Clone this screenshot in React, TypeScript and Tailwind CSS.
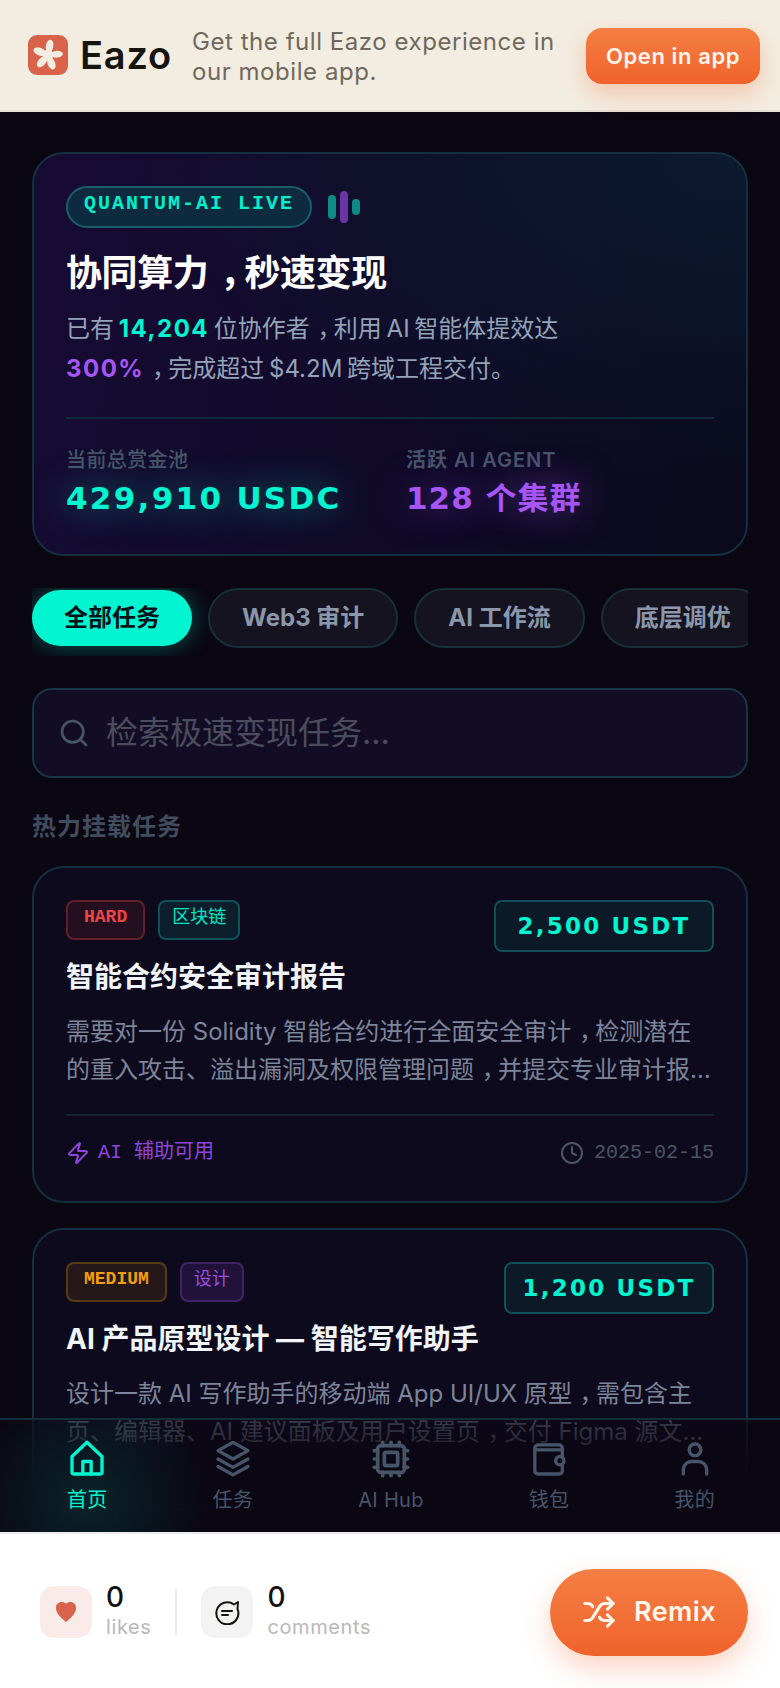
import { Clock, Cpu, Search, Shuffle, Zap } from "lucide-react"
import type { ReactNode } from "react"

const sans = "font-['Inter','Noto_Sans_CJK_SC',sans-serif]"
const mono = "font-['Liberation_Mono','Noto_Sans_CJK_SC',monospace]"
const display = "font-['DejaVu_Sans','Noto_Sans_CJK_SC',sans-serif]"

const chips = ["全部任务", "Web3 审计", "AI 工作流", "底层调优"]

const tasks = [
  {
    level: "HARD",
    levelClass: "border-[#ef44444d] bg-[#ef44441a] text-[#ef4444]",
    category: "区块链",
    categoryClass: "border-[#00ffd540] bg-[#00ffd514] text-[#00e8c6]",
    reward: "2,500 USDT",
    rewardClass: "w-[220px]",
    title: "智能合约安全审计报告",
    desc: "需要对一份 Solidity 智能合约进行全面安全审计，检测潜在的重入攻击、溢出漏洞及权限管理问题，并提交专业审计报告和修复建议方案",
  },
  {
    level: "MEDIUM",
    levelClass: "border-[#f59e0b40] bg-[#f59e0b1a] text-[#f59e0b]",
    category: "设计",
    categoryClass: "border-[#a855f740] bg-[#a855f71f] text-[#9d4edd]",
    reward: "1,200 USDT",
    rewardClass: "w-[210px]",
    title: "AI 产品原型设计 — 智能写作助手",
    desc: "设计一款 AI 写作助手的移动端 App UI/UX 原型，需包含主页、编辑器、AI 建议面板及用户设置页，交付 Figma 源文件及完整交互说明文档",
  },
]

// the reference sets the full-width comma in the middle of its box
function commas(text: string) {
  return text.split("，").flatMap((part, i) =>
    i === 0
      ? [part]
      : [
          <span key={i} className="pl-[0.32em] tracking-[-0.32em]">
            ，
          </span>,
          part,
        ],
  )
}

function HomeIcon() {
  return (
    <svg width="40" height="40" viewBox="0 0 24 24" fill="none" stroke="currentColor" strokeWidth="2" strokeLinecap="round" strokeLinejoin="round">
      <path d="M3 10.500 12 2l9 8.500V20a1 1 0 0 1-1 1H4a1 1 0 0 1-1-1z" />
      <path d="M9.500 21v-7.500h5V21" />
    </svg>
  )
}

function LayersIcon() {
  return (
    <svg width="40" height="40" viewBox="0 0 24 24" fill="none" stroke="currentColor" strokeWidth="2" strokeLinecap="round" strokeLinejoin="round">
      <path d="M12 2l9 5-9 5-9-5z" />
      <path d="M3 12l9 5 9-5" />
      <path d="M3 16.500l9 5 9-5" />
    </svg>
  )
}

function WalletIcon() {
  return (
    <svg width="40" height="40" viewBox="0 0 24 24" fill="none" stroke="currentColor" strokeWidth="2" strokeLinecap="round" strokeLinejoin="round">
      <path d="M20 10V5.500a2 2 0 0 0-2-2H5.500A2 2 0 0 0 3.500 5.500V19a2 2 0 0 0 2 2H18a2 2 0 0 0 2-2v-3" />
      <path d="M3.500 6.500H20" />
      <rect x="16" y="10.500" width="5" height="5" rx="2.500" />
    </svg>
  )
}

function UserIcon() {
  return (
    <svg width="40" height="40" viewBox="0 0 24 24" fill="none" stroke="currentColor" strokeWidth="2" strokeLinecap="round" strokeLinejoin="round">
      <circle cx="12" cy="6.500" r="3.500" />
      <path d="M5 21v-2.500a5 5 0 0 1 5-5h4a5 5 0 0 1 5 5V21" />
    </svg>
  )
}

const navItems = [
  { label: "首页", icon: <HomeIcon />, active: true },
  { label: "任务", icon: <LayersIcon />, active: false },
  { label: "AI Hub", icon: <Cpu size={40} strokeWidth={2.2} />, active: false },
  { label: "钱包", icon: <WalletIcon />, active: false },
  { label: "我的", icon: <UserIcon />, active: false },
]

function Banner() {
  return (
    <div className="relative z-20 flex h-[112px] shrink-0 items-center border-b-2 border-[#e6e0d5] bg-[#f3ede1] pl-[28px] pr-[20px]">
      <svg width="40" height="40" viewBox="0 0 40 40" className="shrink-0">
        <rect width="40" height="40" rx="9" fill="#d9634a" />
        <g fill="#f3ede1">
          <ellipse cx="20" cy="11" rx="3.800" ry="6.500" transform="rotate(10 20 20)" />
          <ellipse cx="20" cy="11" rx="3.400" ry="6" transform="rotate(85 20 20)" />
          <ellipse cx="20" cy="11" rx="3.800" ry="6.500" transform="rotate(158 20 20)" />
          <ellipse cx="20" cy="11" rx="3.800" ry="6.500" transform="rotate(222 20 20)" />
          <ellipse cx="20" cy="11" rx="3.800" ry="6.500" transform="rotate(292 20 20)" />
          <circle cx="20" cy="20" r="5.500" />
        </g>
      </svg>
      <span className={`${sans} ml-[12px] text-[38px] font-semibold leading-none tracking-[0.8px] text-[#15140f]`}>
        Eazo
      </span>
      <p className={`${sans} ml-[20px] mt-[4px] w-[376px] text-[24px] leading-[30px] tracking-[0.55px] text-[#6f685d]`}>
        Get the full Eazo experience in our mobile app.
      </p>
      <button className={`${sans} ml-auto mt-[2px] h-[56px] w-[174px] rounded-[16px] bg-gradient-to-b from-[#f47f43] to-[#f0622b] text-[22px] font-semibold tracking-[0.6px] text-[#fff6ee] shadow-[0_10px_24px_rgba(240,98,43,0.28)]`}>
        Open in app
      </button>
    </div>
  )
}

function Hero() {
  return (
    <section className="relative overflow-hidden rounded-[32px] border-2 border-[#12303f] bg-[radial-gradient(ellipse_at_100%_0%,#0c1a30,transparent_60%),linear-gradient(100deg,#170b34,#0e0a24_70%,#0a0a1c)] px-[32px] pb-[34px] pt-[32px]">
      <div className="flex items-center gap-[16px]">
        <span className={`${mono} flex h-[42px] items-center rounded-full border-2 border-[#17606b] bg-[#0d2a3f] px-[16px] pb-[6px] text-[20px] font-bold tracking-[2px] text-[#00f0cc]`}>
          QUANTUM-AI LIVE
        </span>
        <div className="flex items-center gap-[4px]">
          <span className="h-[24px] w-[8px] rounded-full bg-[#0f8a86]" />
          <span className="h-[32px] w-[8px] rounded-full bg-[#6a35a5]" />
          <span className="h-[16px] w-[8px] rounded-full bg-[#0f8a86]" />
        </div>
      </div>
      <h1 className="mt-[20px] text-[36px] font-bold leading-[50px] tracking-[-0.4px] text-white">{commas("协同算力，秒速变现")}</h1>
      <p className="mt-[11px] text-[24px] leading-[40px] text-[#94a3b8] [word-spacing:-2px]">
        已有 <b className="font-bold tracking-[1.5px] text-[#00f5d0]">14,204</b> 位协作者{commas("，利用 AI 智能体提效达")}
        <br />
        <b className="font-bold tracking-[1.5px] text-[#a855f7]">300%</b>
        {commas("，完成超过 $4.2M 跨域工程交付。")}
      </p>
      <div className="mt-[28px] h-[2px] bg-[#122b3c]" />
      <div className="mt-[27px] flex">
        <div className="w-[340px]">
          <div className="text-[20px] font-medium leading-[28px] tracking-[0.4px] text-[#475569]">当前总赏金池</div>
          <div className={`${display} mt-[2px] text-[31px] font-bold leading-[44px] tracking-[2.3px] text-[#00f5d0] [text-shadow:0_0_36px_rgba(0,245,208,0.55)]`}>
            429,910 USDC
          </div>
        </div>
        <div>
          <div className="text-[20px] font-semibold leading-[28px] tracking-[1px] text-[#475569]">活跃 AI AGENT</div>
          <div className={`${display} mt-[2px] text-[31px] font-bold leading-[44px] tracking-[1px] text-[#a855f7] [text-shadow:0_0_36px_rgba(168,85,247,0.55)]`}>
            128 个集群
          </div>
        </div>
      </div>
    </section>
  )
}

function Chips() {
  return (
    <div className="mt-[32px] flex items-center gap-[16px] overflow-hidden pb-[8px]">
      {chips.map((chip, i) =>
        i === 0 ? (
          <button key={chip} className="h-[56px] shrink-0 rounded-full bg-[#00f5d0] px-[32px] text-[24px] font-bold text-[#06121a] shadow-[0_0_24px_rgba(0,245,208,0.35)]">
            {chip}
          </button>
        ) : (
          <button key={chip} className="h-[60px] shrink-0 rounded-full border-2 border-[#153039] bg-[#15131f] px-[32px] text-[24px] font-bold text-[#8b97ab]">
            {chip}
          </button>
        ),
      )}
    </div>
  )
}

function SearchBox() {
  return (
    <div className="mt-[32px] flex h-[90px] items-center gap-[16px] rounded-[20px] border-2 border-[#153645] bg-[#120d24] px-[24px]">
      <Search size={32} strokeWidth={2} className="shrink-0 text-[#475569]" />
      <input
        placeholder="检索极速变现任务..."
        className="w-full bg-transparent text-[32px] outline-none placeholder:text-[#4b4d5f]"
      />
    </div>
  )
}

function TaskCard({ task }: { task: (typeof tasks)[number] }) {
  return (
    <article className="rounded-[32px] border-2 border-[#12303f] bg-[#0e0a1e] px-[32px] pb-[30px] pt-[32px]">
      <div className="flex items-start justify-between">
        <div className="flex gap-[13px]">
          <span className={`${mono} h-[40px] rounded-[8px] border-2 px-[16px] pt-[1px] text-[18px] font-bold leading-[28px] ${task.levelClass}`}>
            {task.level}
          </span>
          <span className={`h-[40px] rounded-[8px] border-2 px-[12px] pt-[1px] text-[18px] leading-[28px] ${task.categoryClass}`}>
            {task.category}
          </span>
        </div>
        <span className={`${display} ${task.rewardClass} flex h-[52px] items-center justify-center rounded-[8px] border-2 border-[#0f4f55] bg-[#0c1a28] text-[23px] font-bold tracking-[2.2px] text-[#00f5d0]`}>
          {task.reward}
        </span>
      </div>
      <h3 className="mt-[5px] text-[28px] font-bold leading-[40px] text-[#f1f5f9]">{task.title}</h3>
      <p className="mt-[16px] line-clamp-2 text-[24px] leading-[38px] text-[#7c8599]">{commas(task.desc)}</p>
      <div className="mt-[25px] flex items-center justify-between border-t-2 border-[#14212f] pt-[19px]">
        <span className={`${mono} flex items-center gap-[8px] text-[20px] leading-[36px] text-[#8f45dd]`}>
          <Zap size={24} strokeWidth={2} />
          AI 辅助可用
        </span>
        <span className={`${mono} flex items-center gap-[10px] text-[20px] leading-[36px] text-[#4b5563]`}>
          <Clock size={24} strokeWidth={2} />
          2025-02-15
        </span>
      </div>
    </article>
  )
}

function BottomNav() {
  return (
    <nav className="absolute inset-x-0 bottom-0 flex h-[114px] items-start justify-between overflow-hidden border-t-2 border-[#123039] bg-gradient-to-b from-[#0a061299] via-[#0a0612f5] to-[#0a0612] pl-[67px] pr-[65px] pt-[19px]">
      <div className="pointer-events-none absolute left-[-32px] top-[-40px] h-[240px] w-[240px] bg-[radial-gradient(closest-side,rgba(0,245,208,0.12),transparent)]" />
      {navItems.map(({ label, icon, active }) => (
        <div key={label} className={`relative flex flex-col items-center gap-[7px] ${active ? "text-[#00f5d0]" : "text-[#475569]"}`}>
          {icon}
          <span className="text-[20px] leading-[28px] tracking-[0.3px]">{label}</span>
        </div>
      ))}
    </nav>
  )
}

function Stat({ count, label, boxClass, children }: { count: number; label: string; boxClass: string; children: ReactNode }) {
  return (
    <div className="flex items-center gap-[14px]">
      <span className={`flex h-[52px] w-[52px] items-center justify-center rounded-[14px] ${boxClass}`}>{children}</span>
      <div className="flex flex-col">
        <span className="text-[28px] font-medium leading-[30px] text-[#111]">{count}</span>
        <span className="text-[20px] leading-[30px] tracking-[0.6px] text-[#b8b8b8]">{label}</span>
      </div>
    </div>
  )
}

function BottomBar() {
  return (
    <div className={`${sans} flex h-[156px] shrink-0 items-center justify-between border-t-2 border-[#ececec] bg-white pl-[40px] pr-[32px] pt-[2px]`}>
      <div className="flex items-center">
        <Stat count={0} label="likes" boxClass="bg-[#f9ece8]">
          <svg width="22" height="22" viewBox="0 0 24 24" fill="#d9634a">
            <path d="M12 23C8 19 1 14 1 7.500 1 3.500 4 1 7 1c2 0 4 .5 5 2 1-1.500 3-2 5-2 3 0 6 2.500 6 6.500C23 14 16 19 12 23z" />
          </svg>
        </Stat>
        <div className="mx-[24px] h-[48px] w-[2px] bg-[#ececec]" />
        <Stat count={0} label="comments" boxClass="bg-[#f3f3f3]">
          <svg width="26" height="26" viewBox="0 0 26 26" fill="none" stroke="#15140f" strokeWidth="2" strokeLinecap="round">
            <path d="M20 5.500A11 11 0 1 0 23.500 10L24 3z" strokeLinejoin="round" />
            <path d="M8 12h10M8 16h6" />
          </svg>
        </Stat>
      </div>
      <button className="flex h-[87px] w-[198px] items-center justify-center gap-[18px] rounded-full bg-gradient-to-b from-[#f47f43] to-[#f0622b] text-[27px] font-semibold tracking-[0.4px] text-[#fff6ee] shadow-[0_12px_28px_rgba(240,98,43,0.28)]">
        <Shuffle size={34} strokeWidth={2.2} />
        Remix
      </button>
    </div>
  )
}

export default function App() {
  return (
    <div className={`${sans} flex h-[1688px] w-[780px] flex-col overflow-hidden bg-[#0a0612]`}>
      <Banner />
      <main className="relative min-h-0 flex-1 overflow-hidden">
        <div className="flex flex-col px-[32px] pt-[40px]">
          <Hero />
          <Chips />
          <SearchBox />
          <h2 className="mt-[32px] text-[24px] font-bold leading-[34px] tracking-[1px] text-[#414c5e]">热力挂载任务</h2>
          <div className="mt-[22px] flex flex-col gap-[25px]">
            {tasks.map((task) => (
              <TaskCard key={task.title} task={task} />
            ))}
          </div>
        </div>
        <BottomNav />
      </main>
      <BottomBar />
    </div>
  )
}
